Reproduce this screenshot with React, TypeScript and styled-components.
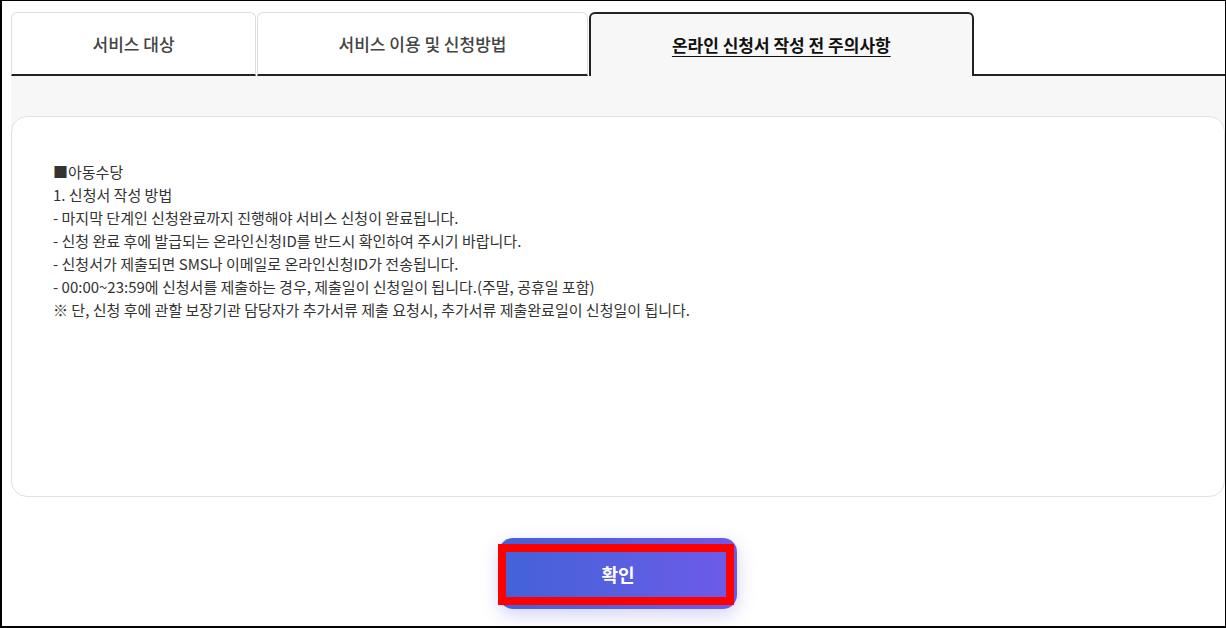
import React from "react";
import styled, { createGlobalStyle } from "styled-components";

const Global = createGlobalStyle`
  html, body { margin: 0; padding: 0; background: #fff; }
  body { font-family: "Noto Sans CJK KR", "Noto Sans", sans-serif; }
  * { box-sizing: border-box; }
`;

const Frame = styled.div`
  width: 1226px;
  height: 628px;
  border-style: solid;
  border-color: #000;
  border-width: 1px 1px 2px 2px;
  padding: 11px 0 0 9px;
  display: flex;
  flex-direction: column;
  overflow: hidden;
`;

const TabBar = styled.div`
  display: flex;
  height: 64px;
  align-items: stretch;
`;

const Tab = styled.div<{ $active?: boolean }>`
  display: flex;
  align-items: center;
  justify-content: center;
  padding: 0 ${(p) => (p.$active ? "81px" : "80.5px")};
  margin-right: ${(p) => (p.$active ? "0" : "1px")};
  border-radius: 6px 6px 0 0;
  font-size: 17px;
  white-space: nowrap;
  ${(p) =>
    p.$active
      ? `
    background: #f7f7f7;
    border: 2px solid #222;
    border-bottom: none;
    color: #111;
    font-weight: 700;
    text-decoration: underline;
    text-underline-offset: 4px;
    text-decoration-thickness: 1px;
    padding-bottom: 2px;
  `
      : `
    background: #fff;
    border: 1px solid #dedede;
    border-bottom: 2px solid #222;
    color: #444;
    font-weight: 500;
  `}
`;

const Filler = styled.div`
  flex: 1;
  border-bottom: 2px solid #222;
`;

const Panel = styled.div`
  background: linear-gradient(#f7f7f7 0, #f7f7f7 60px, #fff 60px);
  padding-top: 40px;
`;

const Card = styled.div`
  height: 381px;
  background: #fff;
  border: 1px solid #e2e2e2;
  border-radius: 16px;
  padding: 43px 41px;
`;

const Line = styled.p`
  margin: 0;
  font-size: 15px;
  line-height: 23px;
  color: #333;
  white-space: pre;
`;

const Footer = styled.div`
  display: flex;
  justify-content: center;
  padding-top: 41px;
`;

const ButtonWrap = styled.div`
  position: relative;
`;

const ConfirmButton = styled.button`
  width: 238px;
  height: 71px;
  border: none;
  border-radius: 14px;
  background: linear-gradient(90deg, #4262d8 0%, #5a5fe0 55%, #6e5aea 100%);
  box-shadow: 0 6px 18px rgba(98, 90, 225, 0.28);
  color: #fff;
  font-family: "Noto Sans CJK KR", sans-serif;
  font-size: 18px;
  font-weight: 700;
  cursor: pointer;
`;

const Highlight = styled.div`
  position: absolute;
  left: -1px;
  top: 6px;
  width: 236px;
  height: 61px;
  border: 8px solid #ff0000;
  pointer-events: none;
`;

const lines = [
  "■아동수당",
  "1. 신청서 작성 방법",
  "- 마지막 단계인 신청완료까지 진행해야 서비스 신청이 완료됩니다.",
  "- 신청 완료 후에 발급되는 온라인신청ID를 반드시 확인하여 주시기 바랍니다.",
  "- 신청서가 제출되면 SMS나 이메일로 온라인신청ID가 전송됩니다.",
  "- 00:00~23:59에 신청서를 제출하는 경우, 제출일이 신청일이 됩니다.(주말, 공휴일 포함)",
  "※ 단, 신청 후에 관할 보장기관 담당자가 추가서류 제출 요청시, 추가서류 제출완료일이 신청일이 됩니다.",
];

export default function App() {
  return (
    <>
      <Global />
      <Frame>
        <TabBar>
          <Tab>서비스 대상</Tab>
          <Tab>서비스 이용 및 신청방법</Tab>
          <Tab $active>온라인 신청서 작성 전 주의사항</Tab>
          <Filler />
        </TabBar>
        <Panel>
          <Card>
            {lines.map((l) => (
              <Line key={l}>{l}</Line>
            ))}
          </Card>
        </Panel>
        <Footer>
          <ButtonWrap>
            <ConfirmButton>확인</ConfirmButton>
            <Highlight />
          </ButtonWrap>
        </Footer>
      </Frame>
    </>
  );
}
